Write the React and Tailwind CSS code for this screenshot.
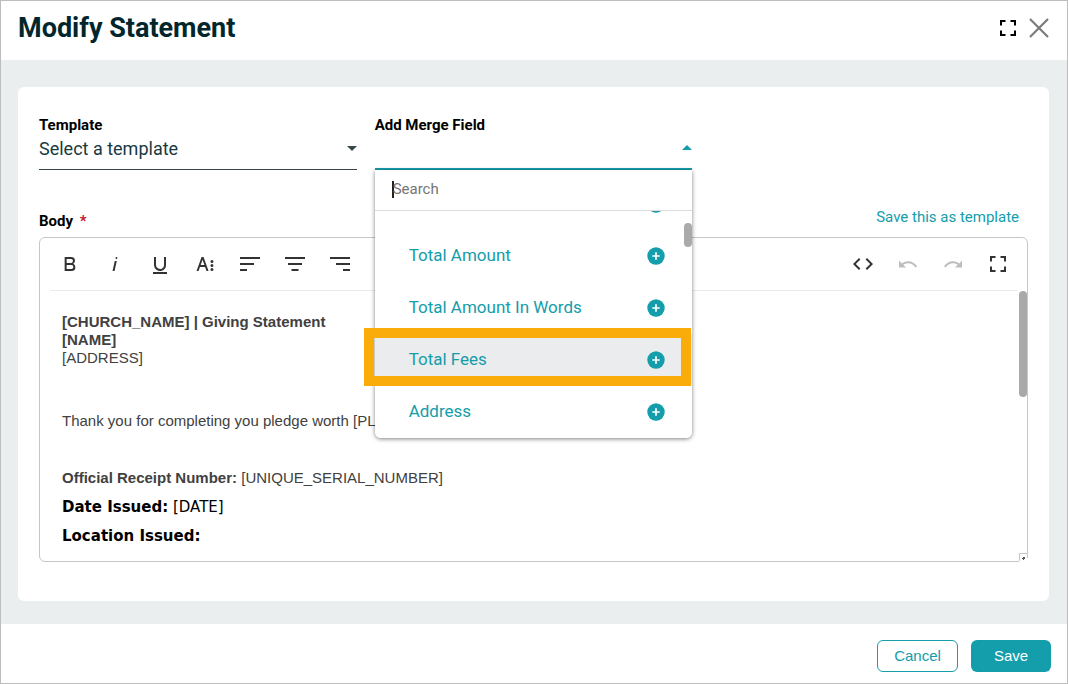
import { useState } from "react";

const MERGE_FIELDS = ["Total Amount", "Total Amount In Words", "Total Fees", "Address"];

const FULLSCREEN = "M4 4h5.5v2H6v3.5H4zM14.5 4H20v5.5h-2V6h-3.5zM4 14.5h2V18h3.5v2H4zM18 14.5h2V20h-5.5v-2H18z";

const FORMAT_TOOLS = [
    { name: "Bold", d: "M15.25,11.8h0A3.68,3.68,0,0,0,17,9a3.93,3.93,0,0,0-3.86-4H6.65V19h7a3.74,3.74,0,0,0,3.7-3.78V15.1A3.64,3.64,0,0,0,15.25,11.8ZM8.65,7h4.2a2.09,2.09,0,0,1,2,1.3,2.09,2.09,0,0,1-1.37,2.61,2.23,2.23,0,0,1-.63.09H8.65Zm4.6,10H8.65V13h4.6a2.09,2.09,0,0,1,2,1.3,2.09,2.09,0,0,1-1.37,2.61A2.23,2.23,0,0,1,13.25,17Z" },
    { name: "Italic", d: "M11.76,9h2l-2.2,10h-2Zm1.68-4a1,1,0,1,0,1,1,1,1,0,0,0-1-1Z" },
    { name: "Underline", d: "M19,20v2H5V20Zm-3-6.785a4,4,0,0,1-5.74,3.4A3.75,3.75,0,0,1,8,13.085V5.005H6v8.21a6,6,0,0,0,8,5.44,5.851,5.851,0,0,0,4-5.65v-8H16ZM16,5v0h2V5ZM8,5H6v0H8Z" },
    { name: "More Text", d: "M13.55,19h2l-5-14h-2l-5,14h2l1.4-4h5.1Zm-5.9-6,1.9-5.2,1.9,5.2Zm12.8,4.5a1.5,1.5,0,1,1-1.5-1.5A1.5,1.5,0,0,1,20.45,17.5Zm0-4a1.5,1.5,0,1,1-1.5-1.5A1.5,1.5,0,0,1,20.45,13.5Zm0-4A1.5,1.5,0,1,1,18.95,8,1.5,1.5,0,0,1,20.45,9.5Z" },
    { name: "Align Left", d: "M2 5h20v2H2zM2 11h14v2H2zM2 17h7v2H2z" },
    { name: "Align Center", d: "M2 5h20v2H2zM5 11h14v2H5zM8.5 17h7v2h-7z" },
    { name: "Align Right", d: "M2 5h20v2H2zM8 11h14v2H8zM15 17h7v2h-7z" },
];

const VIEW_TOOLS = [
    { name: "Code View", d: "M9.4,16.6,4.8,12,9.4,7.4,8,6,2,12l6,6Zm5.2,0L19.2,12,14.6,7.4,16,6l6,6-6,6Z" },
    { name: "Undo", disabled: true, d: "M10.4,9.4c-1.7,0.3-3.2,0.9-4.6,2L3,8.5v7h7l-2.7-2.7c3.7-2.6,8.8-1.8,11.5,1.9c0.2,0.3,0.4,0.5,0.5,0.8l1.8-0.9C18.9,10.8,14.7,8.7,10.4,9.4z" },
    { name: "Redo", disabled: true, d: "M13.6,9.4c1.7,0.3,3.2,0.9,4.6,2L21,8.5v7h-7l2.7-2.7C13,10.1,7.9,11,5.3,14.7c-0.2,0.3-0.4,0.5-0.5,0.8L3,14.6C5.1,10.8,9.3,8.7,13.6,9.4z" },
    { name: "Fullscreen", d: FULLSCREEN },
];

function Icon({ d }) {
    return (
        <svg viewBox="0 0 24 24" className="size-6 fill-current" aria-hidden="true">
            <path d={d} />
        </svg>
    );
}

function ToolButton({ tool }) {
    return (
        <button
            type="button"
            aria-label={tool.name}
            disabled={tool.disabled}
            className="w-[45px] h-[52px] flex items-center justify-center text-[#333333] disabled:text-[#bdbdbd]"
        >
            <Icon d={tool.d} />
        </button>
    );
}

function PlusCircle() {
    return (
        <svg viewBox="0 0 18 18" className="size-[18px] shrink-0" aria-hidden="true">
            <circle cx="9" cy="9" r="8.7" fill="#149daa" />
            <path d="M9 5.3v7.4M5.3 9h7.4" stroke="#fff" strokeWidth="1.7" />
        </svg>
    );
}

function MergeFieldMenu({ active }) {
    const [search, setSearch] = useState("");
    const fields = MERGE_FIELDS.filter(f => f.toLowerCase().includes(search.toLowerCase()));

    return (
        <div className="absolute z-10 top-full inset-x-0 bg-white rounded-b-md shadow-[0_1px_4px_rgba(0,0,0,0.5)]">
            <div className="h-[41px] pl-[17px] pb-[2px] flex items-center border-b border-[#dcdcdc] bg-white">
                <span className="w-[2px] h-[17px] bg-[#222222]" />
                <input
                    type="text"
                    aria-label="Search"
                    placeholder="Search"
                    value={search}
                    onChange={e => setSearch(e.target.value)}
                    className="flex-1 min-w-0 -ml-px text-[15px] leading-5 text-[#222222] placeholder:text-[#757575] outline-none caret-transparent"
                />
            </div>

            <div className="overflow-hidden rounded-b-md">
                <ul className="-mt-[33px]">
                    <li className="h-[52px] pr-[27px] flex items-center justify-end">
                        <PlusCircle />
                    </li>
                    {fields.map(field => (
                        <li key={field}>
                            <button
                                type="button"
                                className={`w-full h-[52px] pl-[34px] pr-[27px] flex items-center justify-between text-[17px] text-[#149daa] ${field === active ? "bg-[#ebeced]" : "bg-white"}`}
                            >
                                {field}
                                <PlusCircle />
                            </button>
                        </li>
                    ))}
                </ul>
            </div>

            <div className="absolute right-0 top-[53px] w-2 h-6 rounded-full bg-[#aaaaaa]" />
            <div className="absolute -left-[11px] right-px top-[158px] h-[58px] border-[10px] border-[#f9ac0a] pointer-events-none" />
        </div>
    );
}

export default function App() {
    const [template, setTemplate] = useState("");

    return (
        <div className="min-h-screen flex flex-col border border-[#bdbdbd] bg-white font-[Roboto,sans-serif]">
            <header className="h-[59px] pl-[17px] pr-[18px] pb-[5px] flex items-center justify-between">
                <h1 className="text-[27px] leading-8 font-bold text-[#02262b]">Modify Statement</h1>
                <div className="flex items-center gap-[9px]">
                    <button type="button" aria-label="Expand" className="text-black">
                        <Icon d={FULLSCREEN} />
                    </button>
                    <button type="button" aria-label="Close">
                        <svg viewBox="0 0 20 20" className="size-5" aria-hidden="true">
                            <path d="M1 1l18 18M19 1L1 19" stroke="#7b7b7b" strokeWidth="2.2" />
                        </svg>
                    </button>
                </div>
            </header>

            <main className="flex-1 bg-[#eaeeef] pl-[17px] pr-[18px] pt-[27px] pb-[23px]">
                <section className="bg-white rounded-md px-[21px] pt-7 pb-[39px]">
                    <div className="grid grid-cols-3 gap-[18px]">
                        <div>
                            <label htmlFor="template" className="block text-[15px] leading-5 font-bold text-black">Template</label>
                            <div className="relative">
                                <select
                                    id="template"
                                    value={template}
                                    onChange={e => setTemplate(e.target.value)}
                                    className="w-full h-[35px] pb-2 appearance-none bg-transparent border-b border-[#37474a] text-[18px] text-[#173a3f] outline-none"
                                >
                                    <option value="">Select a template</option>
                                </select>
                                <svg viewBox="0 0 10 5" className="absolute right-0 top-[11px] w-[10px] h-[5px] pointer-events-none" aria-hidden="true">
                                    <path d="M0 0h10L5 5z" fill="#37474a" />
                                </svg>
                            </div>
                        </div>

                        <div className="relative">
                            <label htmlFor="merge-field" className="block text-[15px] leading-5 font-bold text-black">Add Merge Field</label>
                            <button
                                id="merge-field"
                                type="button"
                                aria-haspopup="listbox"
                                aria-expanded="true"
                                className="w-full h-[35px] pb-[9px] flex items-center justify-end border-b-2 border-[#149daa]"
                            >
                                <svg viewBox="0 0 10 5" className="w-[10px] h-[5px]" aria-hidden="true">
                                    <path d="M0 5h10L5 0z" fill="#149daa" />
                                </svg>
                            </button>
                            <MergeFieldMenu active="Total Fees" />
                        </div>
                    </div>

                    <div className="mt-[37px] mb-[6px] flex items-end justify-between">
                        <label id="body-label" className="text-[15px] leading-5 font-bold text-black">
                            Body <span className="ml-[3px] text-[#c8102e]">*</span>
                        </label>
                        <a href="#save-template" className="mb-1 mr-[9px] text-[15px] leading-5 text-[#149daa]">Save this as template</a>
                    </div>

                    <div className="relative border border-[#c6c6c6] rounded-md">
                        <div className="px-[7px] flex justify-between">
                            <div className="flex">
                                {FORMAT_TOOLS.map(tool => <ToolButton key={tool.name} tool={tool} />)}
                            </div>
                            <div className="flex">
                                {VIEW_TOOLS.map(tool => <ToolButton key={tool.name} tool={tool} />)}
                            </div>
                        </div>
                        <div className="mx-[10px] h-px bg-[#ebebeb]" />

                        <div
                            role="textbox"
                            aria-multiline="true"
                            aria-labelledby="body-label"
                            contentEditable
                            suppressContentEditableWarning
                            className="pl-[22px] pr-6 pt-[22px] pb-4 font-['Liberation_Sans',Arial,sans-serif] text-[15px] leading-[18px] text-[#414141] outline-none"
                        >
                            <p className="font-bold">[CHURCH_NAME] | Giving Statement</p>
                            <p className="font-bold">[NAME]</p>
                            <p>[ADDRESS]</p>
                            <p className="mt-[45px]">Thank you for completing you pledge worth [PL</p>
                            <p className="mt-[39px]"><strong>Official Receipt Number:</strong> [UNIQUE_SERIAL_NUMBER]</p>
                            <p className="mt-[11px] font-['DejaVu_Sans',Verdana,sans-serif] text-black"><strong>Date Issued:</strong> [DATE]</p>
                            <p className="mt-[11px] font-['DejaVu_Sans',Verdana,sans-serif] text-black"><strong>Location Issued:</strong></p>
                        </div>

                        <div className="absolute right-0 top-[53px] w-2 h-[106px] rounded-full bg-[#a9a9a9]" />
                        <svg viewBox="0 0 9 9" className="absolute -right-px -bottom-px size-[9px]" aria-hidden="true">
                            <path d="M0 0h9v9H0z" fill="#fff" />
                            <path d="M.5 8V.5H8.5V5" fill="none" stroke="#c6c6c6" />
                            <path d="M4 4h2v2h-1v1h-1v-1h-1v-1h1z" fill="#555" />
                        </svg>
                    </div>
                </section>
            </main>

            <footer className="h-[59px] pr-4 pt-1 flex items-center justify-end gap-[13px] font-['Liberation_Sans',Arial,sans-serif] text-[15px]">
                <button type="button" className="w-[81px] h-8 pt-px rounded-md border border-[#149daa] bg-white text-[#149daa]">Cancel</button>
                <button type="button" className="w-20 h-8 pt-px rounded-md bg-[#149daa] text-white">Save</button>
            </footer>
        </div>
    );
}
